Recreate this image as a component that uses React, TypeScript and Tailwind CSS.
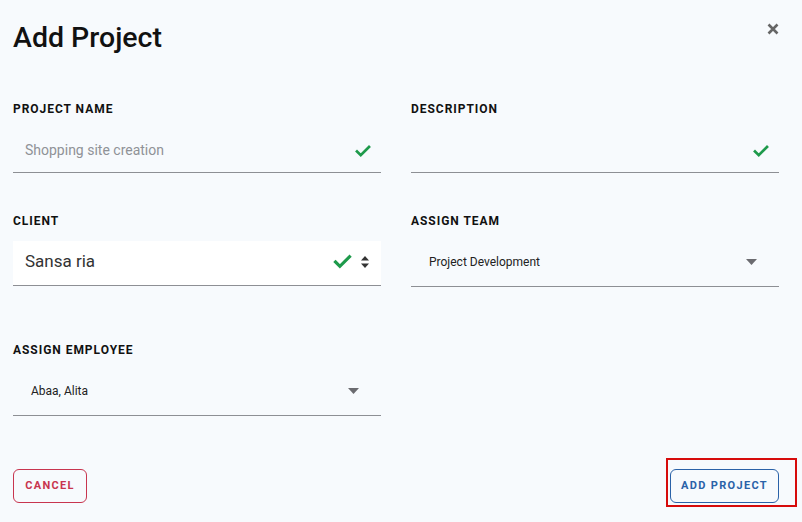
import React from 'react';

const Check = ({ size = 18 }: { size?: number }) => (
  <svg width={size} height={size} viewBox="0 0 24 24" fill="none">
    <path d="M4 12.5l5 5L20 6.5" stroke="#1e9a4b" strokeWidth="3.6" strokeLinecap="square" />
  </svg>
);

const Caret = () => (
  <svg width="11" height="6" viewBox="0 0 11 6">
    <path d="M0 0h11L5.5 6z" fill="#6b6b70" />
  </svg>
);

const UpDown = () => (
  <svg width="8" height="12" viewBox="0 0 8 12">
    <path d="M4 0L8 4.5H0z" fill="#333" />
    <path d="M4 12L8 7.5H0z" fill="#333" />
  </svg>
);

const Label = ({ children }: { children: React.ReactNode }) => (
  <div className="text-[12px] leading-4 font-bold tracking-[0.08em] text-[#111]">{children}</div>
);

export default function App() {
  return (
    <div
      className="w-[802px] h-[522px] bg-[#f7fafd] px-[13px] pt-[22px] relative overflow-hidden"
      style={{ fontFamily: 'Roboto, "Liberation Sans", sans-serif' }}
    >
      <div className="flex items-start justify-between pr-[10px]">
        <h1 className="text-[28.5px] leading-8 font-medium text-[#111]">Add Project</h1>
        <svg width="12" height="12" viewBox="0 0 12 12" className="mt-[1px]">
          <path d="M1.5 1.5l9 9M10.5 1.5l-9 9" stroke="#666" strokeWidth="2.6" />
        </svg>
      </div>

      <div className="grid grid-cols-[368px_368px] gap-x-[30px] mt-[47px]">
        <div>
          <Label>PROJECT NAME</Label>
          <div className="mt-[13px] h-[43px] border-b border-[#8d8f94] flex items-center justify-between pl-[12px] pr-[9px] pb-[1px]">
            <span className="text-[14px] text-[#8f9297]">Shopping site creation</span>
            <Check />
          </div>
        </div>
        <div>
          <Label>DESCRIPTION</Label>
          <div className="mt-[13px] h-[43px] border-b border-[#8d8f94] flex items-center justify-end pr-[9px] pb-[1px]">
            <Check />
          </div>
        </div>

        <div className="mt-[40px]">
          <Label>CLIENT</Label>
          <div className="mt-[12px] h-[45px] bg-white border-b border-[#8d8f94] flex items-center justify-between pl-[12px] pr-[12px] pb-[3px]">
            <span className="text-[17px] text-[#333]">Sansa ria</span>
            <div className="flex items-center gap-[8px]">
              <Check size={21} />
              <UpDown />
            </div>
          </div>
        </div>
        <div className="mt-[40px]">
          <Label>ASSIGN TEAM</Label>
          <div className="mt-[13px] h-[45px] border-b border-[#8d8f94] flex items-center justify-between pl-[18px] pr-[22px] pb-[4px]">
            <span className="text-[12px] text-[#222]">Project Development</span>
            <Caret />
          </div>
        </div>

        <div className="mt-[55px]">
          <Label>ASSIGN EMPLOYEE</Label>
          <div className="mt-[13px] h-[45px] border-b border-[#8d8f94] flex items-center justify-between pl-[18px] pr-[22px] pb-[4px]">
            <span className="text-[12px] text-[#222]">Abaa, Alita</span>
            <Caret />
          </div>
        </div>
        <div />
      </div>

      <div className="flex justify-between mt-[53px] pr-[10px]">
        <button className="h-[34px] w-[74px] rounded-[6px] border border-[#c8354f] text-[#c8354f] text-[11px] font-bold tracking-[0.12em]">
          CANCEL
        </button>
        <div className="relative">
          <button className="h-[34px] w-[109px] rounded-[6px] border border-[#2a62a8] text-[#2a62a8] text-[11px] font-bold tracking-[0.12em]">
            ADD PROJECT
          </button>
          <div className="absolute left-[-4px] top-[-11px] w-[131px] h-[49px] border-2 border-[#d60b0b] pointer-events-none" />
        </div>
      </div>
    </div>
  );
}
